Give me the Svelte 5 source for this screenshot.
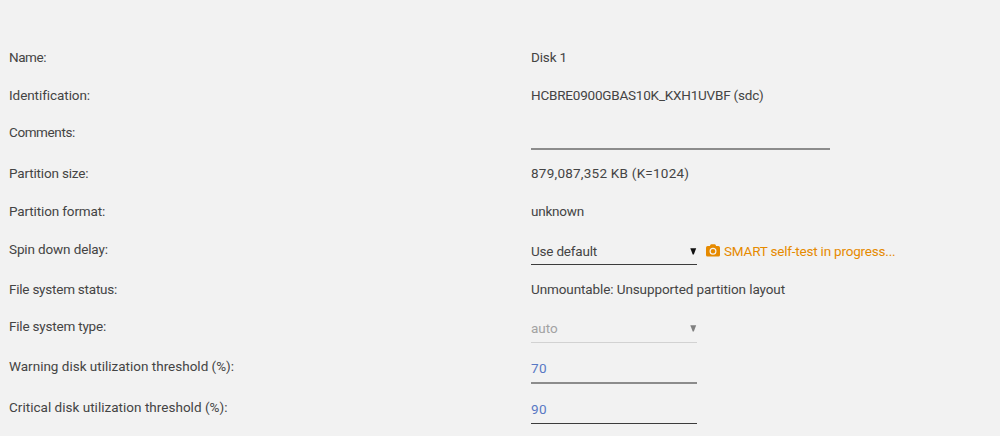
<script lang="ts">
	type Row = {
		label: string;
		kind: 'text' | 'input' | 'select';
		value: string;
		// letter spacing in px for the label and the value
		labelTrack: number;
		valueTrack: number;
		wide?: boolean;
		soft?: boolean;
		disabled?: boolean;
		notice?: string;
	};

	const rows: Row[] = [
		{ label: 'Name:', kind: 'text', value: 'Disk 1', labelTrack: -0.45, valueTrack: -0.15 },
		{ label: 'Identification:', kind: 'text', value: 'HCBRE0900GBAS10K_KXH1UVBF (sdc)', labelTrack: -0.07, valueTrack: -0.21 },
		{ label: 'Comments:', kind: 'input', value: '', labelTrack: -0.4, valueTrack: 0, wide: true, soft: true },
		{ label: 'Partition size:', kind: 'text', value: '879,087,352 KB (K=1024)', labelTrack: -0.17, valueTrack: 0.24 },
		{ label: 'Partition format:', kind: 'text', value: 'unknown', labelTrack: -0.13, valueTrack: -0.23 },
		{ label: 'Spin down delay:', kind: 'select', value: 'Use default', labelTrack: -0.13, valueTrack: -0.2, notice: 'SMART self-test in progress...' },
		{ label: 'File system status:', kind: 'text', value: 'Unmountable: Unsupported partition layout', labelTrack: -0.23, valueTrack: -0.1 },
		{ label: 'File system type:', kind: 'select', value: 'auto', labelTrack: -0.2, valueTrack: -0.05, disabled: true },
		{ label: 'Warning disk utilization threshold (%):', kind: 'input', value: '70', labelTrack: 0, valueTrack: 0.3, soft: true },
		{ label: 'Critical disk utilization threshold (%):', kind: 'input', value: '90', labelTrack: 0.02, valueTrack: 0.3 }
	];
</script>

<dl class="settings">
	{#each rows as row}
		<dt style="letter-spacing: {row.labelTrack}px">{row.label}</dt>
		<dd style="letter-spacing: {row.valueTrack}px">
			{#if row.kind === 'text'}
				<span>{row.value}</span>
			{:else if row.kind === 'input'}
				<div class="field input" class:wide={row.wide} class:soft={row.soft}>{row.value}</div>
			{:else}
				<div class="field select" class:disabled={row.disabled}>
					<span>{row.value}</span>
					<svg class="arrow" width="7" height="7" viewBox="0 0 7 7">
						<path d="M.3.2h5.900L3.800 6.400H2.700z" fill="currentColor" />
					</svg>
				</div>
			{/if}
			{#if row.notice}
				<span class="notice">
					<svg width="14" height="13" viewBox="0 0 14 13">
						<path
							fill="currentColor"
							fill-rule="evenodd"
							d="M4.200 1.200Q4.500.2 5.400.2h3.200q.9 0 1.200 1l.3.9h2.300q1.600 0 1.600 1.600v7.200q0 1.600-1.600 1.600H1.600Q0 12.500 0 10.900V3.700q0-1.600 1.600-1.600h2.300zM7 3.700a3.500 3.500 0 1 0 0 7a3.500 3.500 0 1 0 0-7zM7 4.900a2.300 2.300 0 1 1 0 4.600a2.300 2.300 0 1 1 0-4.600z"
						/>
					</svg>
					<span>{row.notice}</span>
				</span>
			{/if}
		</dd>
	{/each}
</dl>

<style>
	:global(body) {
		background: #f2f2f2;
	}

	.settings {
		display: grid;
		grid-template-columns: 522px 1fr;
		grid-template-rows: 38px 37px 41px 38px 38px 40px 37px 40px 41px 38px;
		box-sizing: border-box;
		height: 436px;
		margin: 0;
		padding: 47px 0 0 9px;
		overflow: hidden;
		color: #444;
		font-family: Roboto, sans-serif;
		font-size: 13.5px;
		line-height: 20px;
		white-space: nowrap;
	}

	dd {
		display: flex;
		align-items: flex-start;
		margin: 0;
	}

	.field {
		box-sizing: border-box;
		width: 166px;
		height: 27px;
		padding-top: 2px;
		border-bottom: 1px solid #3c3c3c;
	}

	.input {
		color: #5878c4;
	}

	.wide {
		width: 299px;
	}

	.soft {
		height: 28px;
		border-bottom: 2px solid #8c8c8c;
	}

	.select {
		display: flex;
		justify-content: space-between;
		height: 26px;
	}

	.arrow {
		margin-top: 7px;
		color: #111;
	}

	.disabled {
		height: 27px;
		border-color: #d2d2d2;
		color: #a2a2a2;
	}

	.disabled .arrow {
		color: #808080;
	}

	.notice {
		display: flex;
		gap: 4px;
		padding: 2px 0 0 9px;
		color: #e68a00;
		letter-spacing: -0.2px;
	}

	.notice svg {
		margin-top: 3px;
	}
</style>
